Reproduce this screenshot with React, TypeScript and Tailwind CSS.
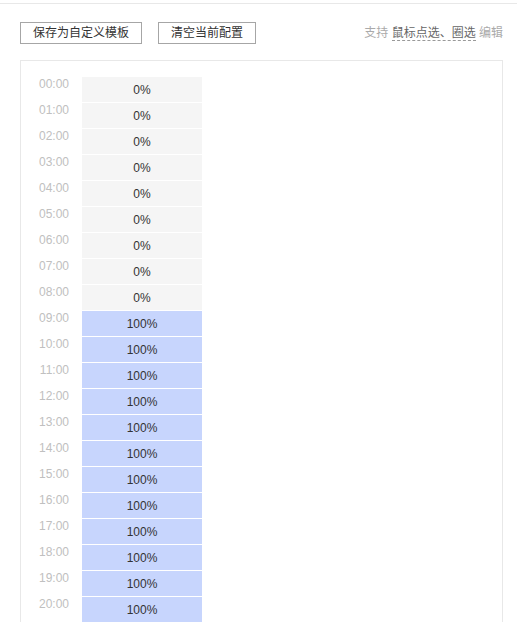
import React from "react";

const hours = Array.from({ length: 24 }, (_, i) => ({
  label: `${String(i).padStart(2, "0")}:00`,
  value: i >= 9 ? 100 : 0,
}));

export default function App() {
  return (
    <div
      className="bg-white text-[#333] text-[12px]"
      style={{ fontFamily: '"Liberation Sans", "Noto Sans CJK SC", sans-serif' }}
    >
      <div className="mt-[3px] border-t border-[#e8e8e8] pl-[20px] pr-[14px]">
        {/* toolbar */}
        <div className="flex items-center h-[22px] mt-[18px]">
          <button className="h-[22px] px-[12px] border border-[#a6a6a6] bg-white text-[12px] leading-[20px] text-[#333]">
            保存为自定义模板
          </button>
          <button className="h-[22px] ml-[16px] px-[12px] border border-[#a6a6a6] bg-white text-[12px] leading-[20px] text-[#333]">
            清空当前配置
          </button>
          <div className="ml-auto text-[12px] text-[#aaa]">
            支持{" "}
            <span className="text-[#666] border-b border-dashed border-[#999]">鼠标点选、圈选</span>{" "}
            编辑
          </div>
        </div>

        {/* schedule panel */}
        <div className="mt-[16px] border border-[#e8e8e8] pt-[16px] pb-[16px]">
          {hours.map((h) => (
            <div key={h.label} className="flex">
              <div className="w-[61px] pr-[13px] text-right text-[12px] leading-[14px] text-[#c0c0c0]">
                {h.label}
              </div>
              <div
                className={
                  h.value === 100
                    ? "w-[120px] h-[26px] pt-px border-b border-white bg-[#c7d5fd] text-center leading-[24px] text-[#333]"
                    : "w-[120px] h-[26px] pt-px border-b border-white bg-[#f5f5f5] text-center leading-[24px] text-[#333]"
                }
              >
                {h.value}%
              </div>
            </div>
          ))}
        </div>
      </div>
    </div>
  );
}
